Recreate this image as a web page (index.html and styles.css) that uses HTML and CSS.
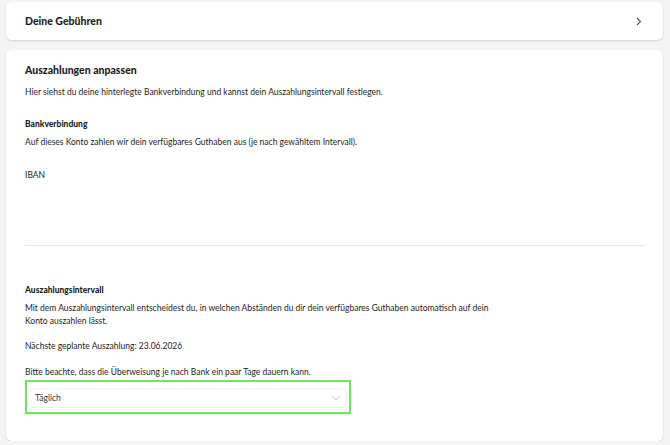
FILE: index.html
```html
<!DOCTYPE html>
<html lang="de">

<head>
    <meta charset="UTF-8">
    <meta name="viewport" content="width=device-width, initial-scale=1.0">
    <title>Auszahlungen</title>
    <link rel="stylesheet" href="styles.css">
</head>

<body>
    <section class="card fees">
        <h2>Deine Gebühren</h2>
        <svg class="chev" width="6" height="9" viewBox="0 0 6 9">
            <path d="M1 1 L4.5 4.5 L1 8" fill="none" stroke="#555" stroke-width="1.1" />
        </svg>
    </section>
    <section class="card payout">
        <h2>Auszahlungen anpassen</h2>
        <p class="intro">Hier siehst du deine hinterlegte Bankverbindung und kannst dein Auszahlungsintervall festlegen.</p>

        <h3 class="bank-title">Bankverbindung</h3>
        <p>Auf dieses Konto zahlen wir dein verfügbares Guthaben aus (je nach gewähltem Intervall).</p>
        <div class="iban">
            <span>IBAN</span>
        </div>

        <hr class="divider">

        <h3 class="interval-title">Auszahlungsintervall</h3>
        <p class="interval-text">Mit dem Auszahlungsintervall entscheidest du, in welchen Abständen du dir dein verfügbares Guthaben automatisch auf dein Konto auszahlen lässt.</p>
        <p class="next">Nächste geplante Auszahlung: 23.06.2026</p>
        <p class="note">Bitte beachte, dass die Überweisung je nach Bank ein paar Tage dauern kann.</p>
        <div class="highlight">
            <div class="select">
                <span>Täglich</span>
                <svg width="8" height="5" viewBox="0 0 8 5">
                    <path d="M0.5 0.5 L4 4 L7.5 0.5" fill="none" stroke="#bdbdbd" stroke-width="0.9" />
                </svg>
            </div>
        </div>
    </section>
</body>

</html>
```

FILE: styles.css
```css
* {
    padding: 0;
    margin: 0;
    box-sizing: border-box;
    font-family: Lato, "Noto Sans", sans-serif;
}

body {
    background-color: #f4f4f4;
    padding: 2px 7px 0 6px;
    color: #1e1e1e;
}

.card {
    background-color: #fff;
    border-radius: 6px;
    box-shadow: 0 1px 2px rgba(0, 0, 0, 0.14);
}

h2 {
    font-size: 10.5px;
    font-weight: 900;
    line-height: 14px;
}

h3 {
    font-size: 8.5px;
    font-weight: 900;
    line-height: 13px;
}

p {
    font-size: 8.5px;
    line-height: 13px;
}

.fees {
    height: 38px;
    padding: 0 21px 0 19px;
    display: flex;
    justify-content: space-between;
    align-items: center;
}

.payout {
    margin-top: 10px;
    height: 391px;
    padding: 13px 18px 0 19px;
}

.intro {
    margin-top: 9px;
}

.bank-title {
    margin-top: 19px;
    margin-bottom: 5px;
}

.iban {
    margin-top: 20px;
    height: 76px;
    font-size: 8.5px;
    line-height: 13px;
}

.divider {
    border: none;
    border-top: 1px solid #e6e6e6;
}

.interval-title {
    margin-top: 38px;
    margin-bottom: 5px;
}

.interval-text {
    width: 475px;
}

.next {
    margin-top: 12px;
}

.note {
    margin-top: 13px;
}

.highlight {
    margin-top: 1px;
    width: 326px;
    height: 34px;
    border: 2px solid #6fe45f;
    padding: 6px 2px 0 1px;
    box-shadow: 0 1px 2px rgba(0, 0, 0, 0.1);
}

.select {
    height: 20px;
    border: 1px solid #efefef;
    border-radius: 4px;
    display: flex;
    justify-content: space-between;
    align-items: center;
    padding: 0 6px 0 6px;
    font-size: 8.5px;
    color: #333;
}
```
